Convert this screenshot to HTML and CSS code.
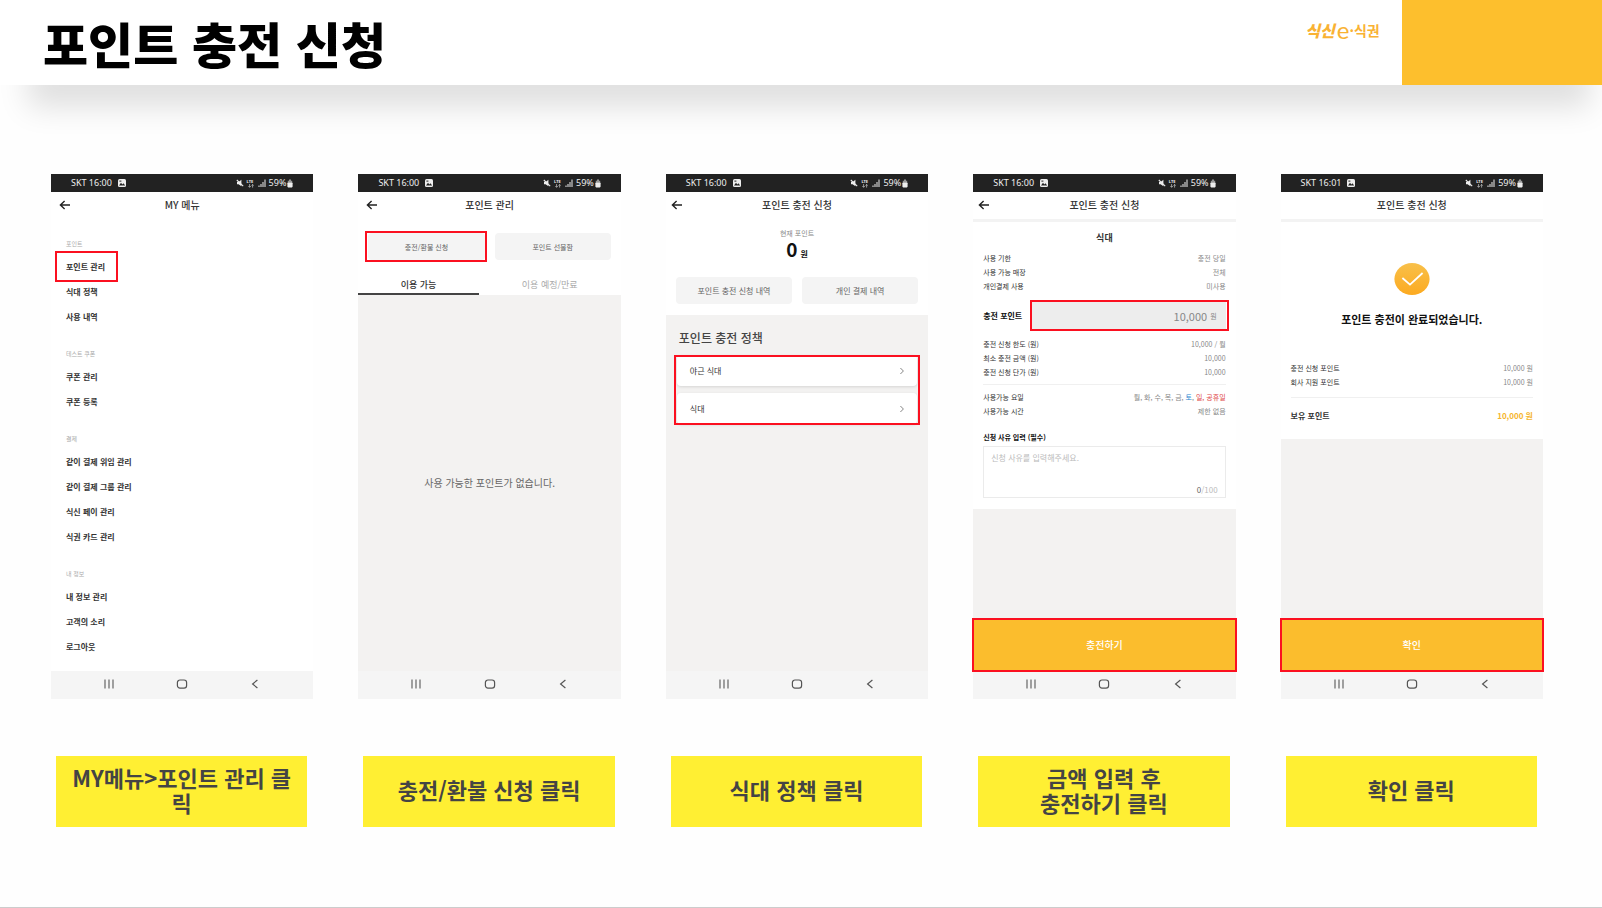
FILE: index.html
```html
<!DOCTYPE html>
<html lang="ko">
<head>
<meta charset="utf-8">
<meta name="viewport" content="width=device-width, initial-scale=1">
<title>포인트 충전 신청</title>
<link rel="stylesheet" href="styles.css">
</head>
<body>
<svg class="sprite" aria-hidden="true">
  <symbol id="i-photo" viewBox="0 0 10 10"><rect x="1" y="1" width="8" height="8" rx="1.5" fill="#eee"/><path d="M2 7.4l2-2.6 1.4 1.6 1-1.2L8.2 7.4z" fill="#222"/><rect x="2.4" y="2.6" width="2" height="1" fill="#222"/></symbol>
  <symbol id="i-mute" viewBox="0 0 8 8"><path d="M1 3h1.6L5.4.8v6.4L2.6 5.2H1z" fill="#eee"/><path d="M.8 1l6.4 6.2" stroke="#eee" stroke-width="1.1"/></symbol>
  <symbol id="i-arrows" viewBox="0 0 8 4"><path d="M2.6 0v3M1.4 2l1.2 1.4L3.8 2M5.6 3.6V.6M4.6 1.6L5.6.4l1 1.2" fill="none" stroke="#ccc" stroke-width=".7"/></symbol>
  <symbol id="i-signal" viewBox="0 0 8 8"><path d="M1 8V6.4M3 8V5M5 8V3M7 8V.6" stroke="#ddd" stroke-width="1.1"/></symbol>
  <symbol id="i-battery" viewBox="0 0 6 9"><path d="M2 .6h2v1.2h1.2v2H.8v-2H2z" fill="#999"/><rect x=".4" y="3.4" width="5.2" height="5" rx=".8" fill="#eee"/></symbol>
  <symbol id="i-back" viewBox="0 0 12 10"><path d="M11 5H1.6M5.6 1L1.4 5l4.2 4" fill="none" stroke="#222" stroke-width="1.4"/></symbol>
  <symbol id="i-recents" viewBox="0 0 12 12"><path d="M2 1.5v9M6 1.5v9M10 1.5v9" stroke="#666" stroke-width="1.2"/></symbol>
  <symbol id="i-home" viewBox="0 0 12 12"><rect x="1.4" y="2" width="9.2" height="8.2" rx="2.6" fill="none" stroke="#555" stroke-width="1.2"/></symbol>
  <symbol id="i-prev" viewBox="0 0 12 12"><path d="M8.4 2L3.6 6l4.8 4" fill="none" stroke="#555" stroke-width="1.2"/></symbol>
  <symbol id="i-next" viewBox="0 0 6 8"><path d="M1.4 1l3 3-3 3" fill="none" stroke="#777" stroke-width=".9"/></symbol>
</svg>

<header class="top">
  <h1 class="top-title">포인트 충전 신청</h1>
  <p class="logo"><span class="logo-brush">식신</span><span class="logo-e">e</span><span class="logo-tail">·식권</span></p>
  <div class="top-block"></div>
</header>

<main class="steps">
  <figure class="step">
    <section class="phone">
      <div class="status"><span>SKT 16:00</span><svg class="s-photo"><use href="#i-photo"/></svg><span class="status-right"><svg class="s-mute"><use href="#i-mute"/></svg><span class="lte">LTE<svg class="s-arrows"><use href="#i-arrows"/></svg></span><svg class="s-signal"><use href="#i-signal"/></svg><span>59%</span><svg class="s-battery"><use href="#i-battery"/></svg></span></div>
      <div class="bar"><button class="back" aria-label="뒤로"><svg><use href="#i-back"/></svg></button><h2 class="bar-title">MY 메뉴</h2></div>
      <nav class="menu">
        <div class="menu-group">
          <h3 class="menu-label">포인트</h3>
          <a class="menu-item mark mark-menu" href="#">포인트 관리</a>
          <a class="menu-item" href="#">식대 정책</a>
          <a class="menu-item" href="#">사용 내역</a>
        </div>
        <div class="menu-group">
          <h3 class="menu-label">테스트 쿠폰</h3>
          <a class="menu-item" href="#">쿠폰 관리</a>
          <a class="menu-item" href="#">쿠폰 등록</a>
        </div>
        <div class="menu-group">
          <h3 class="menu-label">결제</h3>
          <a class="menu-item" href="#">같이 결제 위임 관리</a>
          <a class="menu-item" href="#">같이 결제 그룹 관리</a>
          <a class="menu-item" href="#">식신 페이 관리</a>
          <a class="menu-item" href="#">식권 카드 관리</a>
        </div>
        <div class="menu-group">
          <h3 class="menu-label">내 정보</h3>
          <a class="menu-item" href="#">내 정보 관리</a>
          <a class="menu-item" href="#">고객의 소리</a>
          <a class="menu-item" href="#">로그아웃</a>
        </div>
      </nav>
      <div class="keys"><button aria-label="최근 앱"><svg><use href="#i-recents"/></svg></button><button aria-label="홈"><svg><use href="#i-home"/></svg></button><button aria-label="이전"><svg><use href="#i-prev"/></svg></button></div>
    </section>
    <figcaption class="caption">MY메뉴&gt;포인트 관리 클릭</figcaption>
  </figure>

  <figure class="step">
    <section class="phone">
      <div class="status"><span>SKT 16:00</span><svg class="s-photo"><use href="#i-photo"/></svg><span class="status-right"><svg class="s-mute"><use href="#i-mute"/></svg><span class="lte">LTE<svg class="s-arrows"><use href="#i-arrows"/></svg></span><svg class="s-signal"><use href="#i-signal"/></svg><span>59%</span><svg class="s-battery"><use href="#i-battery"/></svg></span></div>
      <div class="bar"><button class="back" aria-label="뒤로"><svg><use href="#i-back"/></svg></button><h2 class="bar-title">포인트 관리</h2></div>
      <div class="pair pair-top">
        <button class="soft soft-small mark mark-soft">충전/환불 신청</button>
        <button class="soft soft-small">포인트 선물함</button>
      </div>
      <div class="tabs" role="tablist">
        <button class="tab tab-on" role="tab" aria-selected="true">이용 가능</button>
        <button class="tab tab-off" role="tab" aria-selected="false">이용 예정/만료</button>
      </div>
      <div class="fill fill-center"><p class="empty">사용 가능한 포인트가 없습니다.</p></div>
      <div class="keys"><button aria-label="최근 앱"><svg><use href="#i-recents"/></svg></button><button aria-label="홈"><svg><use href="#i-home"/></svg></button><button aria-label="이전"><svg><use href="#i-prev"/></svg></button></div>
    </section>
    <figcaption class="caption">충전/환불 신청 클릭</figcaption>
  </figure>

  <figure class="step">
    <section class="phone">
      <div class="status"><span>SKT 16:00</span><svg class="s-photo"><use href="#i-photo"/></svg><span class="status-right"><svg class="s-mute"><use href="#i-mute"/></svg><span class="lte">LTE<svg class="s-arrows"><use href="#i-arrows"/></svg></span><svg class="s-signal"><use href="#i-signal"/></svg><span>59%</span><svg class="s-battery"><use href="#i-battery"/></svg></span></div>
      <div class="bar bar-tight"><button class="back" aria-label="뒤로"><svg><use href="#i-back"/></svg></button><h2 class="bar-title">포인트 충전 신청</h2></div>
      <div class="balance">
        <p class="balance-label">현재 포인트</p>
        <p class="balance-value">0<small>원</small></p>
      </div>
      <div class="pair pair-balance">
        <button class="soft">포인트 충전 신청 내역</button>
        <button class="soft">개인 결제 내역</button>
      </div>
      <div class="fill policy">
        <h3 class="policy-title">포인트 충전 정책</h3>
        <div class="cards mark mark-cards">
          <a class="card" href="#">야근 식대<svg><use href="#i-next"/></svg></a>
          <a class="card" href="#">식대<svg><use href="#i-next"/></svg></a>
        </div>
      </div>
      <div class="keys"><button aria-label="최근 앱"><svg><use href="#i-recents"/></svg></button><button aria-label="홈"><svg><use href="#i-home"/></svg></button><button aria-label="이전"><svg><use href="#i-prev"/></svg></button></div>
    </section>
    <figcaption class="caption">식대 정책 클릭</figcaption>
  </figure>

  <figure class="step">
    <section class="phone">
      <div class="status"><span>SKT 16:00</span><svg class="s-photo"><use href="#i-photo"/></svg><span class="status-right"><svg class="s-mute"><use href="#i-mute"/></svg><span class="lte">LTE<svg class="s-arrows"><use href="#i-arrows"/></svg></span><svg class="s-signal"><use href="#i-signal"/></svg><span>59%</span><svg class="s-battery"><use href="#i-battery"/></svg></span></div>
      <div class="bar bar-tight bar-rule"><button class="back" aria-label="뒤로"><svg><use href="#i-back"/></svg></button><h2 class="bar-title">포인트 충전 신청</h2></div>
      <form class="form">
        <h3 class="form-title">식대</h3>
        <dl class="rows">
          <div class="row"><dt>사용 기한</dt><dd>충전 당일</dd></div>
          <div class="row"><dt>사용 가능 매장</dt><dd>전체</dd></div>
          <div class="row"><dt>개인결제 사용</dt><dd>미사용</dd></div>
        </dl>
        <div class="amount">
          <label for="amount">충전 포인트</label>
          <span class="amount-box mark mark-amount"><input id="amount" type="text" value="10,000">원</span>
        </div>
        <dl class="rows">
          <div class="row"><dt>충전 신청 한도 (원)</dt><dd>10,000 / 월</dd></div>
          <div class="row"><dt>최소 충전 금액 (원)</dt><dd>10,000</dd></div>
          <div class="row"><dt>충전 신청 단가 (원)</dt><dd>10,000</dd></div>
        </dl>
        <dl class="rows rows-days">
          <div class="row"><dt>사용가능 요일</dt><dd>월, 화, 수, 목, 금, <span class="sat">토</span>, <span class="sun">일, 공휴일</span></dd></div>
          <div class="row"><dt>사용가능 시간</dt><dd>제한 없음</dd></div>
        </dl>
        <label class="reason-label" for="reason">신청 사유 입력 (필수)</label>
        <div class="reason">
          <textarea id="reason" placeholder="신청 사유를 입력해주세요."></textarea>
          <p class="count"><b>0</b>/100</p>
        </div>
      </form>
      <div class="fill"></div>
      <button class="submit mark mark-submit">충전하기</button>
      <div class="keys"><button aria-label="최근 앱"><svg><use href="#i-recents"/></svg></button><button aria-label="홈"><svg><use href="#i-home"/></svg></button><button aria-label="이전"><svg><use href="#i-prev"/></svg></button></div>
    </section>
    <figcaption class="caption">금액 입력 후<br>충전하기 클릭</figcaption>
  </figure>

  <figure class="step">
    <section class="phone">
      <div class="status"><span>SKT 16:01</span><svg class="s-photo"><use href="#i-photo"/></svg><span class="status-right"><svg class="s-mute"><use href="#i-mute"/></svg><span class="lte">LTE<svg class="s-arrows"><use href="#i-arrows"/></svg></span><svg class="s-signal"><use href="#i-signal"/></svg><span>59%</span><svg class="s-battery"><use href="#i-battery"/></svg></span></div>
      <div class="bar bar-rule"><h2 class="bar-title">포인트 충전 신청</h2></div>
      <div class="done">
        <svg class="done-icon" viewBox="0 0 36 32" aria-hidden="true">
          <defs><linearGradient id="gold" x1="0" y1="0" x2="0" y2="1"><stop offset="0" stop-color="#f8c04a"/><stop offset="1" stop-color="#fcaa20"/></linearGradient></defs>
          <ellipse cx="18" cy="16" rx="17.6" ry="16" fill="url(#gold)"/>
          <path d="M8.4 15l7.6 6.6L28.6 10" fill="none" stroke="#fff" stroke-width="1.8"/>
        </svg>
        <h3 class="done-title">포인트 충전이 완료되었습니다.</h3>
        <dl class="rows">
          <div class="row"><dt>충전 신청 포인트</dt><dd>10,000 원</dd></div>
          <div class="row"><dt>회사 지원 포인트</dt><dd>10,000 원</dd></div>
        </dl>
        <dl class="total"><dt>보유 포인트</dt><dd>10,000 원</dd></dl>
      </div>
      <div class="fill"></div>
      <button class="submit mark mark-submit">확인</button>
      <div class="keys"><button aria-label="최근 앱"><svg><use href="#i-recents"/></svg></button><button aria-label="홈"><svg><use href="#i-home"/></svg></button><button aria-label="이전"><svg><use href="#i-prev"/></svg></button></div>
    </section>
    <figcaption class="caption">확인 클릭</figcaption>
  </figure>
</main>
</body>
</html>
```

FILE: styles.css
```css
* {
  box-sizing: border-box;
  margin: 0;
  padding: 0;
}

body {
  display: flex;
  flex-direction: column;
  min-height: 100vh;
  border-bottom: 1px solid #ccc;
  background: #fefefe;
  color: #333;
  font-family: "Noto Sans CJK KR", sans-serif;
}

button,
input,
textarea {
  border: 0;
  background: none;
  color: inherit;
  font: inherit;
}

a {
  color: inherit;
  text-decoration: none;
}

svg {
  display: block;
  flex: none;
}

.sprite {
  position: absolute;
  width: 0;
  height: 0;
}

/* Page header */
.top {
  display: flex;
  align-items: stretch;
  height: 85px;
  background: #fff;
  box-shadow: 8px 42px 30px -20px rgba(0, 0, 0, 0.125);
}

.top-title {
  flex: 1;
  padding: 4px 0 0 43px;
  color: #000;
  font-size: 49px;
  font-weight: 900;
  line-height: 78px;
}

.logo {
  display: flex;
  align-items: center;
  height: 60px;
  margin-right: 22px;
  color: #f9b233;
  line-height: 24px;
}

.logo-brush {
  font-size: 16px;
  font-style: italic;
  font-weight: 900;
}

.logo-e {
  padding-left: 2px;
  font-family: Lato, sans-serif;
  font-size: 24px;
}

.logo-tail {
  font-size: 14px;
  font-weight: 700;
}

.top-block {
  width: 12.5%;
  background: #fdbf2d;
}

/* Steps */
.steps {
  display: grid;
  grid-template-columns: repeat(5, 1fr);
  gap: 45px;
  padding: 89px 59px 40px 51px;
}

.phone {
  display: flex;
  flex-direction: column;
  aspect-ratio: 1 / 2;
  background: #fff;
}

.caption {
  display: flex;
  align-items: center;
  justify-content: center;
  min-height: 71px;
  margin: 57px 6px 0 5px;
  padding: 0 10px 3px;
  background: #ffef33;
  color: #444;
  font-size: 22px;
  font-weight: 700;
  line-height: 25px;
  text-align: center;
}

/* Red highlight frame */
.mark {
  position: relative;
}

.mark::after {
  content: "";
  position: absolute;
  border: 2px solid #fb1020;
  pointer-events: none;
}

.mark-menu::after {
  inset: -3px -13px -3px -11px;
}

.mark-soft::after {
  inset: -2px -2px -2px -3px;
}

.mark-cards::after {
  inset: 0 -3px -1px;
}

.mark-amount::after {
  inset: -2px -3px -2px -2px;
}

.mark-submit::after {
  inset: -2px -1px -1px;
}

/* Phone chrome */
.status {
  display: flex;
  align-items: center;
  height: 18px;
  padding: 0 20px;
  background: #222;
  color: #eee;
  font-family: "Noto Sans", sans-serif;
  font-size: 9px;
  line-height: 18px;
}

.status-right {
  display: flex;
  align-items: center;
  gap: 3px;
  margin-left: auto;
}

.s-photo {
  width: 10px;
  height: 10px;
  margin-left: 5px;
}

.s-mute,
.s-signal {
  width: 8px;
  height: 8px;
}

.lte {
  font-size: 4px;
  font-weight: 700;
  line-height: 5px;
}

.s-arrows {
  width: 8px;
  height: 4px;
}

.s-battery {
  width: 6px;
  height: 9px;
  margin-left: -2px;
}

.bar {
  display: grid;
  align-items: center;
  height: 26px;
  padding: 0 8px;
}

.bar-tight {
  padding: 0 5px;
}

.bar-rule {
  height: 30px;
  padding-bottom: 1px;
  border-bottom: 3px solid #f3f3f3;
}

.back {
  grid-area: 1 / 1;
  justify-self: start;
}

.back svg {
  width: 12px;
  height: 10px;
}

.bar-title {
  grid-area: 1 / 1;
  justify-self: center;
  font-size: 10px;
  font-weight: 500;
  line-height: 26px;
}

.keys {
  display: flex;
  align-items: center;
  justify-content: space-between;
  height: 28px;
  padding: 0 52px 2px;
  background: #f5f5f5;
}

.keys svg {
  width: 12px;
  height: 12px;
}

.fill {
  flex: 1;
  background: #f3f2f1;
}

/* Menu */
.menu {
  display: flex;
  flex: 1;
  flex-direction: column;
  gap: 14px;
  padding: 15px 15px 0;
}

.menu-group {
  display: flex;
  flex-direction: column;
  align-items: flex-start;
}

.menu-label {
  color: #aaa;
  font-size: 6px;
  font-weight: 400;
  line-height: 21px;
}

.menu-item {
  font-size: 8px;
  font-weight: 700;
  line-height: 25px;
}

/* Point management */
.pair {
  display: grid;
  grid-template-columns: 1fr 1fr;
  gap: 10px;
  padding: 0 10px;
}

.pair-top {
  margin-top: 15px;
}

.soft {
  height: 27px;
  border-radius: 4px;
  background: #f4f4f4;
  color: #666;
  font-size: 8px;
}

.soft-small {
  font-size: 7px;
}

.tabs {
  display: grid;
  grid-template-columns: 11fr 13fr;
  margin-top: 13px;
}

.tab {
  height: 22px;
  padding-top: 2px;
  border-bottom: 2px solid transparent;
  font-size: 9px;
}

.tab-on {
  border-color: #444;
  font-weight: 500;
}

.tab-off {
  color: #aaa;
}

.fill-center {
  display: grid;
  place-items: center;
}

.empty {
  color: #666;
  font-size: 10px;
}

/* Charge policies */
.balance {
  display: flex;
  flex-direction: column;
  align-items: center;
  padding-top: 9px;
}

.balance-label {
  color: #888;
  font-size: 7px;
  line-height: 12px;
}

.balance-value {
  display: flex;
  align-items: baseline;
  gap: 3px;
  height: 20px;
  color: #111;
  font-size: 19px;
  font-weight: 700;
  line-height: 20px;
}

.balance-value small {
  font-size: 8px;
}

.pair-balance {
  margin: 18px 0 11px;
}

.policy {
  padding: 12px 11px;
}

.policy-title {
  padding-left: 2px;
  color: #444;
  font-size: 12px;
  font-weight: 500;
  line-height: 22px;
}

.cards {
  display: grid;
  gap: 7px;
  margin-top: 6px;
}

.card {
  display: flex;
  align-items: center;
  justify-content: space-between;
  height: 31px;
  padding: 0 12px 0 13px;
  border-radius: 4px;
  background: #fff;
  box-shadow: 0 1px 3px rgba(0, 0, 0, 0.12);
  font-size: 8px;
}

.card svg {
  width: 6px;
  height: 8px;
}

/* Charge form */
.form {
  padding: 8px 10px 11px;
}

.form-title {
  margin-bottom: 5px;
  font-size: 9px;
  font-weight: 700;
  line-height: 16px;
  text-align: center;
}

.row {
  display: flex;
  justify-content: space-between;
  font-size: 7px;
  line-height: 14px;
}

.row dd {
  color: #888;
}

.row .sat {
  color: #2a86d0;
}

.row .sun {
  color: #e04848;
}

.amount {
  display: flex;
  align-items: center;
  justify-content: space-between;
  margin: 9px 0 8px;
  color: #111;
  font-size: 8px;
  font-weight: 700;
}

.amount-box {
  display: flex;
  align-items: center;
  width: 80%;
  height: 27px;
  padding-right: 9px;
  background: #ededed;
  color: #888;
  font-size: 7px;
  font-weight: 400;
}

.amount-box input {
  width: 100%;
  padding-right: 3px;
  font-size: 11px;
  text-align: right;
}

.rows-days {
  margin-top: 5px;
  padding-top: 5px;
  border-top: 1px solid #f0f0f0;
}

.reason-label {
  display: block;
  margin-top: 12px;
  color: #111;
  font-size: 7px;
  font-weight: 700;
  line-height: 14px;
}

.reason {
  display: flex;
  flex-direction: column;
  height: 52px;
  margin-top: 2px;
  padding: 4px 7px 0;
  border: 1px solid #ebebeb;
}

.reason textarea {
  flex: 1;
  min-height: 0;
  font-size: 8px;
  line-height: 14px;
  resize: none;
}

.reason textarea::placeholder {
  color: #bbb;
}

.count {
  color: #bbb;
  font-size: 8px;
  line-height: 15px;
  text-align: right;
}

.count b {
  color: #666;
  font-weight: 400;
}

.submit {
  height: 51px;
  padding-bottom: 2px;
  background: #fbbd2d;
  color: #fff;
  font-size: 10px;
  font-weight: 500;
}

/* Completion */
.done {
  display: flex;
  flex-direction: column;
  padding: 41px 10px 15px;
}

.done-icon {
  align-self: center;
  width: 36px;
  height: 32px;
}

.done-title {
  margin: 14px 0 32px;
  color: #111;
  font-size: 11px;
  font-weight: 700;
  line-height: 20px;
  text-align: center;
}

.total {
  display: flex;
  justify-content: space-between;
  margin-top: 8px;
  padding-top: 10px;
  border-top: 1px solid #f0f0f0;
  font-size: 8px;
  font-weight: 700;
  line-height: 16px;
}

.total dd {
  color: #f5b52e;
}
```
